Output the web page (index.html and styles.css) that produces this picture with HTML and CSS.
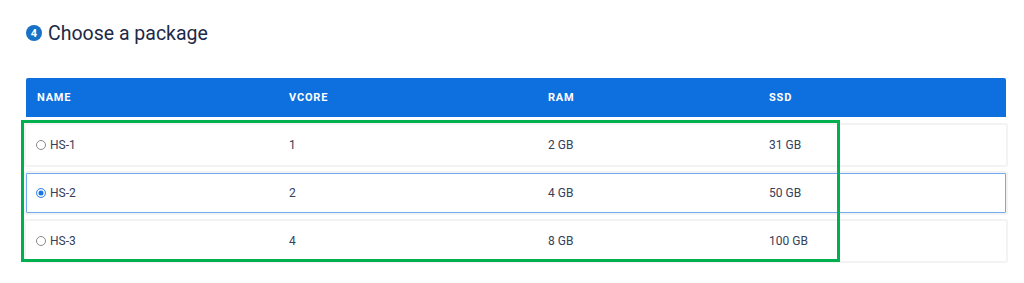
FILE: index.html
```html
<!DOCTYPE html>
<html>
<head>
<meta charset="utf-8">
<link rel="stylesheet" href="styles.css">
</head>
<body>
<div class="page">
  <h2 class="title"><span class="step">4</span>Choose a package</h2>
  <div class="table">
    <div class="thead">
      <div>NAME</div><div>VCORE</div><div>RAM</div><div>SSD</div>
    </div>
    <div class="row">
      <div class="name"><span class="radio"></span>HS-1</div><div>1</div><div>2 GB</div><div>31 GB</div>
    </div>
    <div class="row selected">
      <div class="name"><span class="radio on"></span>HS-2</div><div>2</div><div>4 GB</div><div>50 GB</div>
    </div>
    <div class="row">
      <div class="name"><span class="radio"></span>HS-3</div><div>4</div><div>8 GB</div><div>100 GB</div>
    </div>
    <div class="highlight"></div>
  </div>
</div>
</body>
</html>
```
FILE: styles.css
```css
html, body { margin: 0; padding: 0; background: #fff; }
body { font-family: Roboto, "Noto Sans", sans-serif; }
.page { padding: 21px 18px 0 26px; }
.title {
  margin: 0;
  display: flex;
  align-items: center;
  height: 24px;
  font-size: 19.5px;
  font-weight: 400;
  color: #1d2947;
}
.step {
  width: 16px; height: 16px;
  border-radius: 50%;
  background: #1672c6;
  color: #fff;
  font-size: 11px;
  font-weight: 700;
  display: inline-flex;
  align-items: center;
  justify-content: center;
  margin-right: 6px;
}
.table { position: relative; margin-top: 33px; width: 980px; }
.thead, .row {
  display: grid;
  grid-template-columns: 252px 259px 221px 1fr;
  align-items: center;
  padding-left: 11px;
}
.thead {
  height: 39px;
  background: #0e70de;
  border-radius: 2px 2px 0 0;
  color: #fff;
  font-size: 11px;
  font-weight: 700;
  letter-spacing: 0.8px;
}
.row {
  height: 40px;
  margin: 4px -2px 0 -2px;
  padding-left: 11px;
  border: 2px solid #f3f3f3;
  border-radius: 3px;
  background: #fff;
  font-size: 12px;
  color: #364059;
}
.thead + .row { margin-top: 6px; }
.row.selected { box-shadow: inset 0 0 0 1px #72aaf0; }
.name { display: flex; align-items: center; }
.radio {
  box-sizing: border-box;
  width: 10px; height: 10px;
  border-radius: 50%;
  border: 1px solid #8a8a8a;
  margin-right: 4px;
  margin-left: -1px;
  background: #fff;
}
.radio.on {
  border: 1px solid #4a90e8;
  background: #1a73e8;
  box-shadow: inset 0 0 0 1.5px #fff;
}
.highlight {
  position: absolute;
  left: -5px;
  top: 42px;
  width: 819px;
  height: 142px;
  box-sizing: border-box;
  border: 3px solid #00b050;
  pointer-events: none;
}
```
